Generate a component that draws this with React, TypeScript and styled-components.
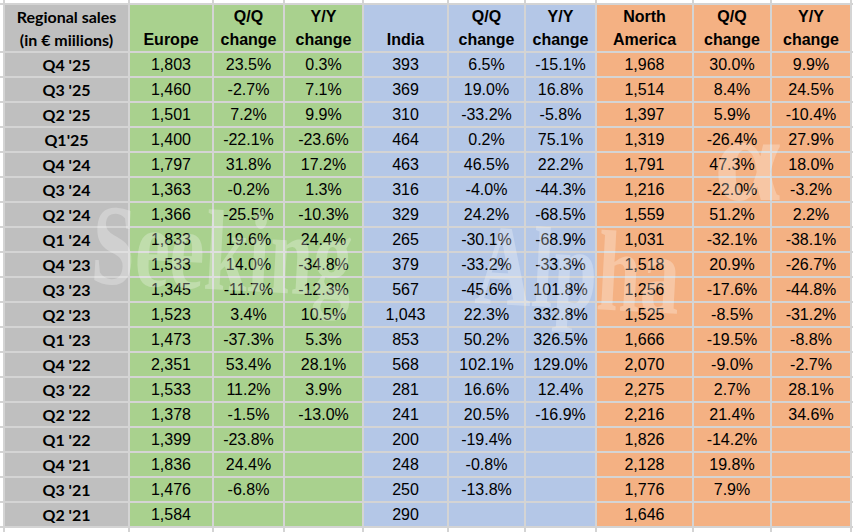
import React from 'react';
import styled, { createGlobalStyle } from 'styled-components';

const GlobalStyle = createGlobalStyle`
  html, body {
    margin: 0;
    padding: 0;
    background: #ffffff;
  }
`;

type Tone = 'blank' | 'label' | 'eu' | 'in' | 'na';

const toneColors: Record<Tone, string> = {
  blank: '#ffffff',
  label: '#bfbfbf',
  eu: '#a9d18e',
  in: '#b4c7e7',
  na: '#f4b183',
};

const Page = styled.div`
  position: relative;
  width: 853px;
  height: 532px;
  overflow: hidden;
`;

const Sheet = styled.div`
  display: grid;
  grid-template-columns: 3px 123px 82px 69px 77px 83px 75px 69px 95px 76px 78px 1fr;
  grid-template-rows: 3px 46px repeat(19, 23px) 1fr;
  gap: 2px;
  width: 853px;
  height: 532px;
  background: #d4d4d4;
`;

const Cell = styled.div<{ $tone: Tone }>`
  background: ${({ $tone }) => toneColors[$tone]};
  display: flex;
  align-items: center;
  justify-content: center;
  font-family: 'Liberation Sans', Arial, sans-serif;
  font-size: 16px;
  color: #000;
  line-height: 23px;
  white-space: nowrap;
`;

const LabelCell = styled(Cell)`
  font-family: Lato, 'Liberation Sans', sans-serif;
  font-weight: 700;
`;

const HeadCell = styled(Cell)`
  flex-direction: column;
  justify-content: flex-end;
  font-weight: 700;
  line-height: 23px;
`;

const HeadLabel = styled(HeadCell)`
  font-family: Lato, 'Liberation Sans', sans-serif;
`;

// faint "Seeking Alpha" stamp lying over the sheet
const Watermark = styled.div`
  position: absolute;
  left: 95px;
  top: 187px;
  display: flex;
  gap: 182px;
  font-family: 'Liberation Serif', 'Times New Roman', serif;
  font-weight: 700;
  font-size: 115px;
  line-height: 1;
  color: rgba(255, 255, 255, 0.27);
  white-space: nowrap;
  pointer-events: none;
  transform: rotate(3deg) scaleX(0.68);
  transform-origin: left top;
`;

const WaterAlpha = styled.div`
  position: absolute;
  left: 714px;
  top: 100px;
  font-family: 'Liberation Serif', 'Times New Roman', serif;
  font-weight: 700;
  font-size: 120px;
  line-height: 1;
  color: rgba(255, 255, 255, 0.27);
  pointer-events: none;
`;

const headers: { tone: Tone; lines: string[] }[] = [
  { tone: 'eu', lines: ['Europe'] },
  { tone: 'eu', lines: ['Q/Q', 'change'] },
  { tone: 'eu', lines: ['Y/Y', 'change'] },
  { tone: 'in', lines: ['India'] },
  { tone: 'in', lines: ['Q/Q', 'change'] },
  { tone: 'in', lines: ['Y/Y', 'change'] },
  { tone: 'na', lines: ['North', 'America'] },
  { tone: 'na', lines: ['Q/Q', 'change'] },
  { tone: 'na', lines: ['Y/Y', 'change'] },
];

const rows: [string, ...string[]][] = [
  ["Q4 '25", '1,803', '23.5%', '0.3%', '393', '6.5%', '-15.1%', '1,968', '30.0%', '9.9%'],
  ["Q3 '25", '1,460', '-2.7%', '7.1%', '369', '19.0%', '16.8%', '1,514', '8.4%', '24.5%'],
  ["Q2 '25", '1,501', '7.2%', '9.9%', '310', '-33.2%', '-5.8%', '1,397', '5.9%', '-10.4%'],
  ["Q1'25", '1,400', '-22.1%', '-23.6%', '464', '0.2%', '75.1%', '1,319', '-26.4%', '27.9%'],
  ["Q4 '24", '1,797', '31.8%', '17.2%', '463', '46.5%', '22.2%', '1,791', '47.3%', '18.0%'],
  ["Q3 '24", '1,363', '-0.2%', '1.3%', '316', '-4.0%', '-44.3%', '1,216', '-22.0%', '-3.2%'],
  ["Q2 '24", '1,366', '-25.5%', '-10.3%', '329', '24.2%', '-68.5%', '1,559', '51.2%', '2.2%'],
  ["Q1 '24", '1,833', '19.6%', '24.4%', '265', '-30.1%', '-68.9%', '1,031', '-32.1%', '-38.1%'],
  ["Q4 '23", '1,533', '14.0%', '-34.8%', '379', '-33.2%', '-33.3%', '1,518', '20.9%', '-26.7%'],
  ["Q3 '23", '1,345', '-11.7%', '-12.3%', '567', '-45.6%', '101.8%', '1,256', '-17.6%', '-44.8%'],
  ["Q2 '23", '1,523', '3.4%', '10.5%', '1,043', '22.3%', '332.8%', '1,525', '-8.5%', '-31.2%'],
  ["Q1 '23", '1,473', '-37.3%', '5.3%', '853', '50.2%', '326.5%', '1,666', '-19.5%', '-8.8%'],
  ["Q4 '22", '2,351', '53.4%', '28.1%', '568', '102.1%', '129.0%', '2,070', '-9.0%', '-2.7%'],
  ["Q3 '22", '1,533', '11.2%', '3.9%', '281', '16.6%', '12.4%', '2,275', '2.7%', '28.1%'],
  ["Q2 '22", '1,378', '-1.5%', '-13.0%', '241', '20.5%', '-16.9%', '2,216', '21.4%', '34.6%'],
  ["Q1 '22", '1,399', '-23.8%', '', '200', '-19.4%', '', '1,826', '-14.2%', ''],
  ["Q4 '21", '1,836', '24.4%', '', '248', '-0.8%', '', '2,128', '19.8%', ''],
  ["Q3 '21", '1,476', '-6.8%', '', '250', '-13.8%', '', '1,776', '7.9%', ''],
  ["Q2 '21", '1,584', '', '', '290', '', '', '1,646', '', ''],
];

const blankRow = (key: string) =>
  Array.from({ length: 12 }, (_, i) => <Cell key={`${key}-${i}`} $tone="blank" />);

const App = () => {
  return (
    <Page>
      <GlobalStyle />
      <Sheet>
        {blankRow('top')}

        <Cell $tone="blank" />
        <HeadLabel $tone="label">
          <span>Regional sales</span>
          <span>(in € miilions)</span>
        </HeadLabel>
        {headers.map((h, i) => (
          <HeadCell key={i} $tone={h.tone}>
            {h.lines.map((l) => (
              <span key={l}>{l}</span>
            ))}
          </HeadCell>
        ))}
        <Cell $tone="blank" />

        {rows.map(([label, ...values]) => (
          <React.Fragment key={label}>
            <Cell $tone="blank" />
            <LabelCell $tone="label">{label}</LabelCell>
            {values.map((v, i) => (
              <Cell key={i} $tone={i < 3 ? 'eu' : i < 6 ? 'in' : 'na'}>
                {v}
              </Cell>
            ))}
            <Cell $tone="blank" />
          </React.Fragment>
        ))}

        {blankRow('bottom')}
      </Sheet>
      <Watermark>
        <span>Seeking</span>
        <span>Alpha</span>
      </Watermark>
      <WaterAlpha>α</WaterAlpha>
    </Page>
  );
};

export default App;
